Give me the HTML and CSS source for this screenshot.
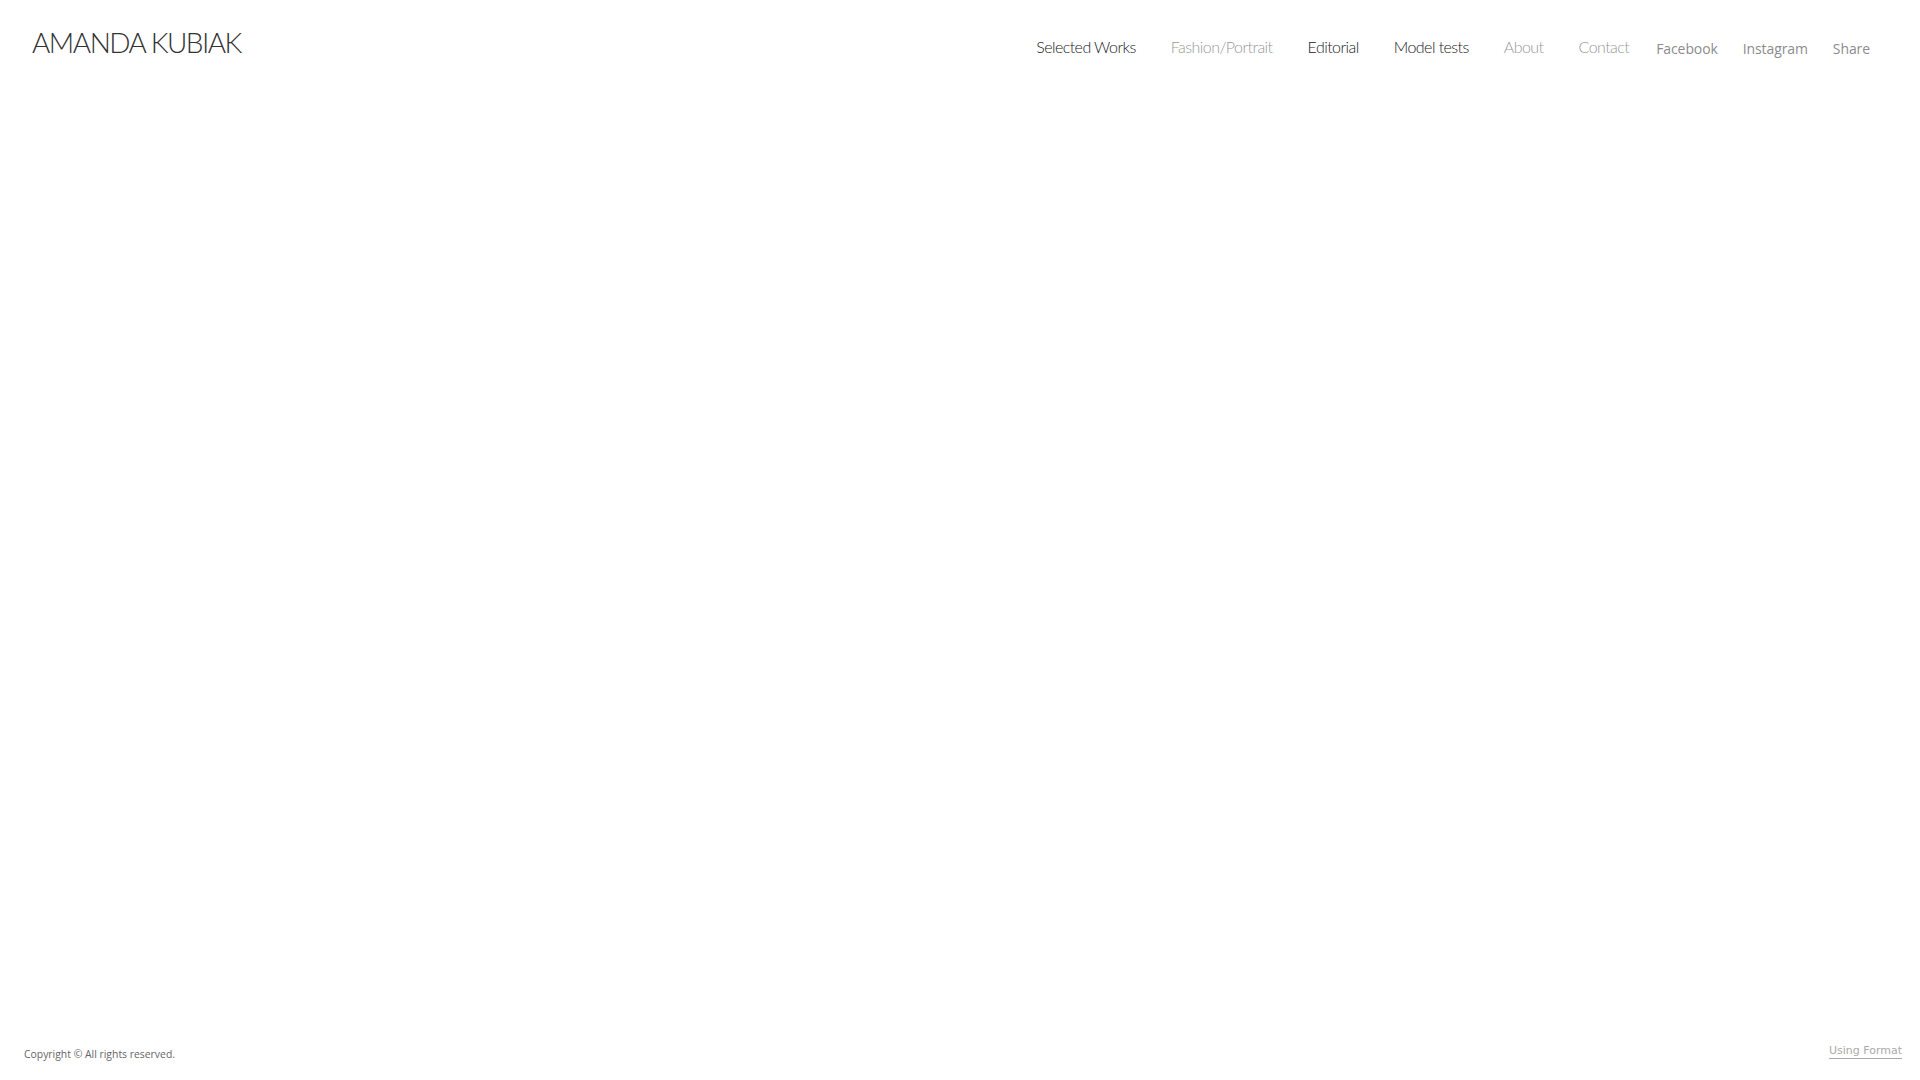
FILE: index.html
```html
<!DOCTYPE html>
<html lang="en">
<head>
<meta charset="utf-8">
<title>Amanda Kubiak</title>
<link rel="stylesheet" href="styles.css">
</head>
<body>
<div class="page">
  <header class="header">
    <a class="logo" href="#">AMANDA KUBIAK</a>
    <nav class="nav">
      <ul class="menu">
        <li><a class="menu-link dark" href="#">Selected Works</a></li>
        <li><a class="menu-link light" href="#">Fashion/Portrait</a></li>
        <li><a class="menu-link dark" href="#">Editorial</a></li>
        <li><a class="menu-link dark" href="#">Model tests</a></li>
        <li><a class="menu-link light" href="#">About</a></li>
        <li><a class="menu-link light" href="#">Contact</a></li>
      </ul>
      <ul class="social">
        <li><a class="social-link" href="#">Facebook</a></li>
        <li><a class="social-link" href="#">Instagram</a></li>
        <li><a class="social-link" href="#">Share</a></li>
      </ul>
    </nav>
  </header>
  <main class="main"></main>
  <footer class="footer">
    <p class="copyright">Copyright © All rights reserved.</p>
    <a class="format" href="#">Using Format</a>
  </footer>
</div>
</body>
</html>
```

FILE: styles.css
```css
html, body {
  margin: 0;
  padding: 0;
  background: #fff;
  height: 100%;
}

.page {
  display: flex;
  flex-direction: column;
  height: 100vh;
}

a {
  text-decoration: none;
}

.header {
  display: flex;
  justify-content: space-between;
  align-items: baseline;
  padding: 24px 50px 0 32px;
}

.logo {
  font-family: "Lato", "Liberation Sans", sans-serif;
  font-weight: 300;
  font-size: 28px;
  line-height: 36px;
  color: #333;
  letter-spacing: -1.5px;
}

.nav {
  display: flex;
  align-items: baseline;
}

.menu, .social {
  list-style: none;
  margin: 0;
  padding: 0;
  display: flex;
  align-items: baseline;
}

.menu {
  gap: 35px;
}

.social {
  gap: 25px;
  margin-left: 27px;
  position: relative;
  top: 1px;
}

.menu-link {
  font-family: "Lato", "Liberation Sans", sans-serif;
  font-size: 16px;
  font-weight: 300;
  letter-spacing: -0.55px;
}

.menu-link.dark {
  color: #222;
}

.menu-link.light {
  color: #999;
}

.social-link {
  font-family: "Open Sans", "Liberation Sans", sans-serif;
  font-size: 14px;
  letter-spacing: -0.1px;
  color: #8c8c8c;
}

.main {
  flex: 1;
}

.footer {
  display: flex;
  justify-content: space-between;
  align-items: flex-end;
  padding: 0 18px 19px 24px;
}

.copyright {
  margin: 0;
  font-family: "Open Sans", "Liberation Sans", sans-serif;
  font-size: 10.4px;
  line-height: 14px;
  color: #666;
}

.format {
  font-family: "DejaVu Sans", sans-serif;
  font-size: 11px;
  line-height: 13px;
  color: #aaa;
  border-bottom: 1px solid #aaa;
  padding-bottom: 1px;
  margin-bottom: 2px;
}
```
